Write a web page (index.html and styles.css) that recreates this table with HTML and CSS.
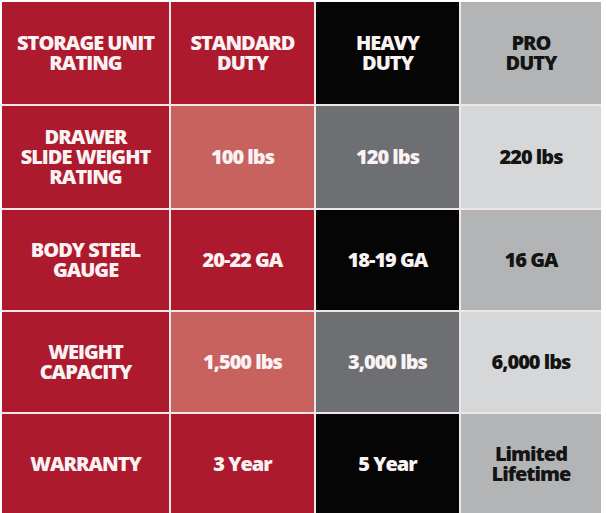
FILE: index.html
```html
<!DOCTYPE html>
<html>
<head>
<meta charset="utf-8">
<link rel="stylesheet" href="styles.css">
</head>
<body>
<div class="chart">
  <div class="cell red">STORAGE UNIT<br>RATING</div>
  <div class="cell red">STANDARD<br>DUTY</div>
  <div class="cell black">HEAVY<br>DUTY</div>
  <div class="cell gray dark-text">PRO<br>DUTY</div>

  <div class="cell red">DRAWER<br>SLIDE WEIGHT<br>RATING</div>
  <div class="cell pink">100 lbs</div>
  <div class="cell slate">120 lbs</div>
  <div class="cell light dark-text">220 lbs</div>

  <div class="cell red">BODY STEEL<br>GAUGE</div>
  <div class="cell red">20-22 GA</div>
  <div class="cell black">18-19 GA</div>
  <div class="cell gray dark-text">16 GA</div>

  <div class="cell red">WEIGHT<br>CAPACITY</div>
  <div class="cell pink">1,500 lbs</div>
  <div class="cell slate">3,000 lbs</div>
  <div class="cell light dark-text">6,000 lbs</div>

  <div class="cell red">WARRANTY</div>
  <div class="cell red">3 Year</div>
  <div class="cell black">5 Year</div>
  <div class="cell gray dark-text">Limited<br>Lifetime</div>
</div>
</body>
</html>
```

FILE: styles.css
```css
html, body {
  margin: 0;
  padding: 0;
  background: #ffffff;
}
body {
  padding: 2px 0 0 2px;
  overflow: hidden;
}
.chart {
  display: grid;
  grid-template-columns: 167px 143px 143px 140px;
  grid-template-rows: 102px 102px 100px 100px 100px;
  gap: 2px;
  background: #f1e6e7;
  width: 599px;
  font-family: "Open Sans", "Liberation Sans", sans-serif;
  font-weight: 800;
  font-size: 20px;
  line-height: 20px;
  letter-spacing: -1px;
}
.cell {
  display: flex;
  align-items: center;
  justify-content: center;
  text-align: center;
  color: #fbf3f3;
}
.red { background: #ae1a2d; }
.pink { background: #c8625f; }
.black { background: #050505; }
.slate { background: #6e6f72; }
.gray { background: #b3b4b6; }
.light { background: #d6d7d9; }
.dark-text { color: #141414; }
```
